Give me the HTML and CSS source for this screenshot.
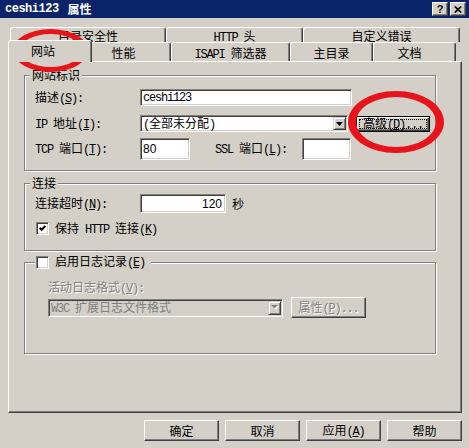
FILE: index.html
```html
<!DOCTYPE html>
<html lang="zh-CN">
<head>
<meta charset="utf-8">
<title>ceshi123 属性</title>
<link rel="stylesheet" href="styles.css">
</head>
<body>
<div class="dlg">
  <div class="titlebar">
    <div class="ttl"><span class="m">ceshi123</span>属性</div>
    <div class="tbtns">
      <span class="tb q">?</span>
      <span class="tb"><svg width="8" height="7" viewBox="0 0 8 7"><path d="M0.8 0.5L7.2 6.5M7.2 0.5L0.8 6.5" stroke="#000" stroke-width="1.7"/></svg></span>
    </div>
  </div>

  <div class="tabs">
    <div class="row back">
      <div class="tab t1"><span>目录安全性</span></div>
      <div class="tab t2"><span><span class="m">HTTP&nbsp;</span>头</span></div>
      <div class="tab t3"><span>自定义错误</span></div>
    </div>
    <div class="row front">
      <div class="tab sel t4"><span>网站</span></div>
      <div class="tab t5"><span>性能</span></div>
      <div class="tab t6"><span><span class="m">ISAPI&nbsp;</span>筛选器</span></div>
      <div class="tab t7"><span>主目录</span></div>
      <div class="tab t8"><span>文档</span></div>
    </div>
  </div>

  <div class="panel">
    <div class="grp g1">
      <div class="gt">网站标识</div>
      <div class="fr r1">
        <span class="lab">描述<span class="m">(<u>S</u>):</span></span>
        <div class="sunk field desc"><span class="m">ceshi123</span></div>
      </div>
      <div class="fr r2">
        <span class="lab"><span class="m">IP&nbsp;</span>地址<span class="m">(<u>I</u>):</span></span>
        <div class="sunk combo">
          <span class="val"><span><span class="m">(</span>全部未分配<span class="m">)</span></span></span>
          <span class="dd"><svg width="7" height="4" viewBox="0 0 7 4"><path d="M0 0h7L3.5 4z" fill="#000"/></svg></span>
        </div>
        <div class="btn adv"><span>高级<span class="m">(<u>D</u>)...</span></span></div>
      </div>
      <div class="fr r3">
        <span class="lab"><span class="m">TCP&nbsp;</span>端口<span class="m">(<u>T</u>):</span></span>
        <div class="sunk field port"><span class="num">80</span></div>
        <span class="lab ssl"><span class="m">SSL&nbsp;</span>端口<span class="m">(<u>L</u>):</span></span>
        <div class="sunk field sslp"></div>
      </div>
    </div>

    <div class="grp g2">
      <div class="gt">连接</div>
      <div class="fr r4">
        <span class="lab">连接超时<span class="m">(<u>N</u>):</span></span>
        <div class="sunk field to"><span class="num">120</span></div>
        <span class="sec">秒</span>
      </div>
      <div class="ck">
        <span class="cb"><svg width="7" height="7" viewBox="0 0 7 7"><path d="M0.6 2.8L2.6 4.8L6.4 1" fill="none" stroke="#000" stroke-width="2"/></svg></span>
        <span>保持<span class="m">&nbsp;HTTP&nbsp;</span>连接<span class="m">(<u>K</u>)</span></span>
      </div>
    </div>

    <div class="grp g3">
      <div class="gt cbt">
        <span class="cb"></span>
        <span>启用日志记录<span class="m">(<u>E</u>)</span></span>
      </div>
      <div class="lg dis">活动日志格式<span class="m">(<u>V</u>):</span></div>
      <div class="r5">
        <div class="sunk fmt">
          <span class="val gray"><span><span class="m">W3C&nbsp;</span>扩展日志文件格式</span></span>
          <span class="dd"><svg width="8" height="5" viewBox="0 0 8 5"><path d="M1 1h7L4.5 4.5z" fill="#fff"/><path d="M0 0h7L3.5 3.5z" fill="#808080"/></svg></span>
        </div>
        <div class="btn prop dis"><span>属性<span class="m">(<u>P</u>)...</span></span></div>
      </div>
    </div>
  </div>

  <div class="btns">
    <div class="btn bb">确定</div>
    <div class="btn bb">取消</div>
    <div class="btn bb"><span>应用<span class="m">(<u>A</u>)</span></span></div>
    <div class="btn bb">帮助</div>
  </div>

  <div class="ann a1"></div>
  <div class="ann a2"></div>
</div>
</body>
</html>
```

FILE: styles.css
```css
* { box-sizing: border-box; margin: 0; padding: 0; }
html, body { width: 469px; height: 448px; overflow: hidden; }
body {
  background: #d4d0c8;
  color: #000;
  font-family: "Noto Sans CJK SC", "Liberation Sans", sans-serif;
  font-size: 12px;
  line-height: 14px;
}
.dlg { position: relative; width: 469px; height: 448px; }
.m { font-family: "Liberation Mono", "Noto Sans CJK SC", monospace; letter-spacing: -1.2px; }
u { text-underline-offset: 1px; }
.num { font-family: "Liberation Sans", sans-serif; font-size: 12px; }

/* title bar */
.titlebar {
  height: 18px;
  background: #0a246a;
  display: flex;
  align-items: center;
  justify-content: space-between;
  padding: 0 3px 0 5px;
}
.ttl { color: #fff; font-weight: 700; display: flex; align-items: center; }
.ttl .m { letter-spacing: -0.5px; margin-right: 9px; }
.tbtns { display: flex; gap: 2px; align-self: flex-start; margin-top: 2px; }
.tb {
  width: 16px; height: 14px;
  background: #d4d0c8;
  border: 1px solid; border-color: #fff #404040 #404040 #fff;
  box-shadow: inset -1px -1px 0 #808080;
  display: flex; align-items: center; justify-content: center;
}
.tb.q { font: 700 11px/1 "Liberation Sans", sans-serif; }

/* tabs */
.tabs { margin: 9px 9px 0 10px; }
.row { display: flex; }
.back { height: 15px; }
.front { height: 19px; }
.tab {
  height: 100%;
  background: #d4d0c8;
  border-top: 1px solid #fff;
  border-left: 1px solid #fff;
  border-right: 1px solid #404040;
  border-radius: 3px 3px 0 0;
  box-shadow: inset -1px 0 0 #808080;
  display: flex;
  justify-content: center;
  white-space: nowrap;
}
.back .tab { padding-top: 1px; }
.front .tab { padding-top: 3px; }
.front .tab.sel {
  height: 22px;
  margin: -2px -2px -1px;
  position: relative;
  z-index: 1;
  padding-top: 3px;
}
.t1 { width: 156px; }
.t2 { width: 137px; }
.t3 { width: 157px; }
.t4 { width: 84px; padding-right: 14px; }
.t5 { width: 81px; padding-right: 14px; }
.t6 { width: 119px; }
.t7 { width: 83px; }
.t8 { width: 83px; padding-right: 10px; }

/* panel */
.panel {
  margin: 0 7px 0 8px;
  height: 352px;
  border: 1px solid; border-color: #fff #404040 #404040 #fff;
  box-shadow: inset -1px -1px 0 #808080;
  padding: 13px 0 0 15px;
}
.grp {
  width: 412px;
  border: 1px solid #808080;
  box-shadow: inset 1px 1px 0 #fff, 1px 1px 0 #fff;
}
.g1 { height: 96px; }
.g2 { height: 68px; margin-top: 12px; }
.g3 { height: 92px; margin-top: 11px; }
.gt {
  width: fit-content;
  height: 14px;
  margin: -8px 0 -6px 5px;
  padding: 0 2px;
  background: #d4d0c8;
  white-space: nowrap;
}
.gt.cbt {
  display: flex; align-items: center; gap: 6px;
  margin-left: 10px; padding: 0 6px 0 1px;
}

.fr { display: flex; align-items: center; padding-left: 10px; }
.lab { width: 105px; flex: none; white-space: nowrap; }
.r1 { margin-top: 13px; height: 17px; }
.r2 { margin-top: 9px; height: 17px; }
.r3 { margin-top: 6px; height: 22px; }
.r4 { margin-top: 10px; height: 19px; }

.sunk {
  background: #fff;
  border: 1px solid; border-color: #808080 #fff #fff #808080;
  box-shadow: inset 1px 1px 0 #404040, inset -1px -1px 0 #d4d0c8;
  flex: none;
}
.field { display: flex; align-items: center; padding-left: 2px; }
.desc { width: 212px; height: 17px; }
.port { width: 50px; height: 22px; }
.ssl { width: 87px; margin-left: 25px; }
.sslp { width: 49px; height: 22px; }
.to { width: 86px; height: 19px; justify-content: flex-end; padding-right: 3px; }
.sec { margin-left: 6px; }

.combo { width: 208px; height: 17px; display: flex; padding: 1px; }
.val { flex: 1; display: flex; align-items: center; padding-left: 1px; white-space: nowrap; }
.dd {
  width: 13px;
  background: #d4d0c8;
  border: 1px solid; border-color: #d4d0c8 #404040 #404040 #d4d0c8;
  box-shadow: inset 1px 1px 0 #fff, inset -1px -1px 0 #808080;
  display: flex; align-items: center; justify-content: center;
}

.btn {
  background: #d4d0c8;
  border: 1px solid; border-color: #fff #404040 #404040 #fff;
  box-shadow: inset -1px -1px 0 #808080;
  display: flex; align-items: center; justify-content: center;
  white-space: nowrap;
  flex: none;
}
.adv {
  width: 74px; height: 16px; margin-left: 8px;
  border-color: #000;
  box-shadow: inset 1px 1px 0 #fff, inset -1px -1px 0 #404040, inset -2px -2px 0 #808080;
  outline: 1px dotted #000;
  outline-offset: -4px;
}

.cb {
  width: 13px; height: 13px; flex: none;
  background: #fff;
  border: 1px solid; border-color: #808080 #fff #fff #808080;
  box-shadow: inset 1px 1px 0 #404040, inset -1px -1px 0 #d4d0c8;
  display: flex; align-items: center; justify-content: center;
}
.ck { margin-top: 9px; height: 13px; display: flex; align-items: center; gap: 6px; padding-left: 11px; white-space: nowrap; }

.dis { color: #808080; text-shadow: 1px 1px 0 #fff; }
.gray { color: #808080; }
.lg { margin-top: 17px; padding-left: 23px; height: 14px; }
.r5 { margin-top: 3px; height: 21px; display: flex; align-items: center; padding-left: 23px; }
.fmt { width: 235px; height: 18px; background: #d4d0c8; display: flex; padding: 1px; }
.prop { width: 75px; height: 21px; margin-left: 8px; }

.btns { display: flex; justify-content: flex-end; gap: 6px; margin: 7px 7px 0 0; }
.bb { width: 75px; height: 21px; }

/* red annotation ellipses drawn over the dialog */
.ann { position: absolute; border: solid #e8141b; border-radius: 50%; }
.a1 { left: 13px; top: 29px; width: 75px; height: 43px; border-width: 5px 7px; }
.a2 { left: 348px; top: 91px; width: 96px; height: 62px; border-width: 6px 8px; }
```
